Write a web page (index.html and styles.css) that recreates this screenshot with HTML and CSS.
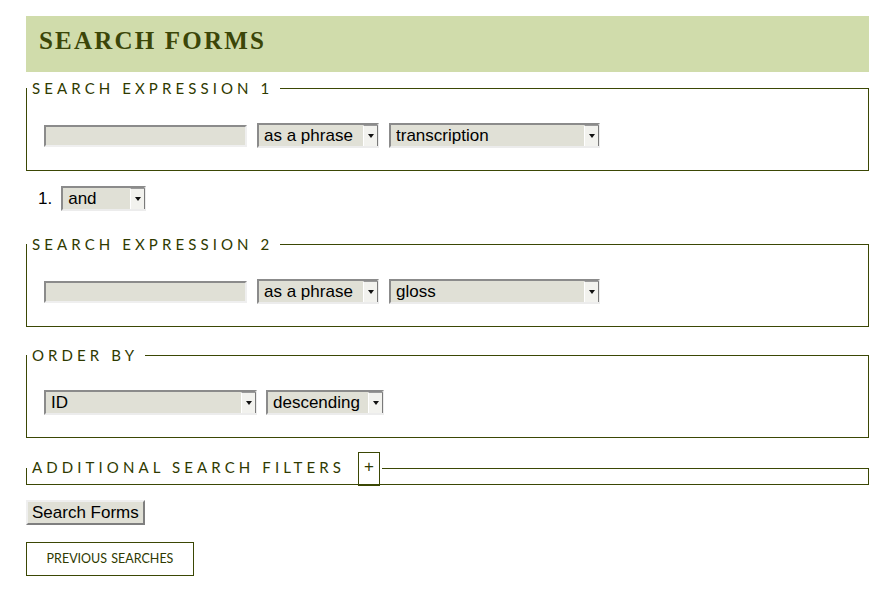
FILE: index.html
```html
<!DOCTYPE html>
<html lang="en">
<head>
<meta charset="utf-8">
<title>Search Forms</title>
<link rel="stylesheet" href="styles.css">
</head>
<body>
<h1 class="page-title">SEARCH FORMS</h1>
<form class="search-form" action="#">
  <fieldset class="group">
    <legend class="group-title">SEARCH EXPRESSION 1</legend>
    <div class="row">
      <input class="text-field w-term" type="text">
      <span class="sel w-mode"><select><option>as a phrase</option></select></span>
      <span class="sel w-field"><select><option>transcription</option></select></span>
    </div>
  </fieldset>

  <div class="op-row">
    <span class="op-num">1.</span>
    <span class="sel w-op"><select><option>and</option></select></span>
  </div>

  <fieldset class="group">
    <legend class="group-title">SEARCH EXPRESSION 2</legend>
    <div class="row">
      <input class="text-field w-term" type="text">
      <span class="sel w-mode"><select><option>as a phrase</option></select></span>
      <span class="sel w-field"><select><option>gloss</option></select></span>
    </div>
  </fieldset>

  <fieldset class="group group-order">
    <legend class="group-title">ORDER BY</legend>
    <div class="row row-tight">
      <span class="sel w-order"><select><option>ID</option></select></span>
      <span class="sel w-dir"><select><option>descending</option></select></span>
    </div>
  </fieldset>

  <fieldset class="group group-filters">
    <legend class="group-title title-filters">ADDITIONAL SEARCH FILTERS <a class="toggle" href="#">+</a></legend>
  </fieldset>

  <button class="submit" type="submit">Search Forms</button>
  <a class="prev-link" href="#">PREVIOUS SEARCHES</a>
</form>
</body>
</html>
```

FILE: styles.css
```css
html, body {
  background: #ffffff;
}

body {
  margin: 16px 20px 0 26px;
  font-family: Lato, "Open Sans", sans-serif;
  color: #3b4704;
}

.page-title {
  margin: 0;
  height: 56px;
  box-sizing: border-box;
  padding: 0 0 6px 13px;
  background: #d0dcab;
  font-family: "Liberation Serif", "Times New Roman", serif;
  font-weight: bold;
  font-size: 25px;
  line-height: 50px;
  letter-spacing: 2.2px;
  color: #3b4608;
}

.search-form {
  margin: 0;
}

.group {
  margin: 8px 0 0;
  padding: 27px 0 22px 0;
  border: 1px solid #3b4704;
  min-width: 0;
}

.group-title {
  margin: 0;
  padding: 0 7px 0 5px;
  font-family: Lato, "Open Sans", sans-serif;
  font-size: 15px;
  line-height: 16px;
  letter-spacing: 4.1px;
  color: #2f3a00;
}

.row {
  display: flex;
  align-items: center;
  gap: 10px;
  margin-left: 17px;
}

.row-tight {
  gap: 9px;
}

.text-field {
  height: 22px;
  box-sizing: border-box;
  margin: 0;
  padding: 0 4px;
  border: 2px solid;
  border-color: #8b8b8b #efefef #efefef #8b8b8b;
  border-radius: 0;
  background: #e0e0d6;
  font: 17px "Liberation Sans", Arial, sans-serif;
  outline: none;
}

.sel {
  position: relative;
  display: inline-block;
  height: 25px;
  flex: none;
}

.sel select {
  appearance: none;
  -webkit-appearance: none;
  display: block;
  width: 100%;
  height: 25px;
  box-sizing: border-box;
  margin: 0;
  padding: 0 0 0 5px;
  border: 2px solid;
  border-color: #8b8b8b #ececec #ececec #8b8b8b;
  border-radius: 0;
  background: #e0e0d6;
  font: 17px "Liberation Sans", Arial, sans-serif;
  color: #000;
  outline: none;
}

.sel::before {
  content: "";
  position: absolute;
  top: 2px;
  right: 1px;
  bottom: 2px;
  width: 13px;
  background: #f2f2ee;
  border-left: 1px solid #ffffff;
  border-right: 1px solid #7a7a7a;
  border-top: 1px solid #9a9a9a;
  box-sizing: content-box;
  pointer-events: none;
}

.sel::after {
  content: "";
  position: absolute;
  right: 5px;
  top: 11px;
  border-left: 3.5px solid transparent;
  border-right: 3.5px solid transparent;
  border-top: 4px solid #111;
  pointer-events: none;
}

.w-term { width: 203px; }
.w-mode { width: 122px; }
.w-field { width: 211px; }
.w-op { width: 85px; }
.w-order { width: 213px; }
.w-dir { width: 118px; }

.op-row {
  display: flex;
  align-items: center;
  gap: 9px;
  margin: 15px 0 25px 12px;
}

.op-num {
  font: 17px "Liberation Sans", Arial, sans-serif;
  color: #000;
}

.group-order {
  margin-top: 20px;
}

.group-filters {
  margin-top: 21px;
  padding: 0 0 7px;
}

.title-filters {
  padding: 0 2px 0 5px;
}

.toggle {
  display: inline-block;
  vertical-align: middle;
  width: 22px;
  height: 34px;
  box-sizing: border-box;
  margin: -9px 0 -9px 5px;
  border: 1px solid #3b4704;
  text-align: center;
  font-family: "Liberation Sans", Arial, sans-serif;
  font-size: 17px;
  line-height: 28px;
  letter-spacing: 0;
  color: #2f3a00;
  text-decoration: none;
}

.submit {
  display: block;
  height: 25px;
  margin: 15px 0 0;
  padding: 0 4px;
  box-sizing: border-box;
  border: 2px solid;
  border-color: #efefef #7f7f7f #7f7f7f #efefef;
  border-radius: 0;
  background: #e0e0d6;
  font: 17px "Liberation Sans", Arial, sans-serif;
  color: #000;
}

.prev-link {
  display: block;
  width: 168px;
  height: 34px;
  box-sizing: border-box;
  margin-top: 17px;
  border: 1px solid #3b4704;
  text-align: center;
  font-size: 12.5px;
  line-height: 32px;
  word-spacing: 1px;
  color: #2f3a00;
  text-decoration: none;
}
```
